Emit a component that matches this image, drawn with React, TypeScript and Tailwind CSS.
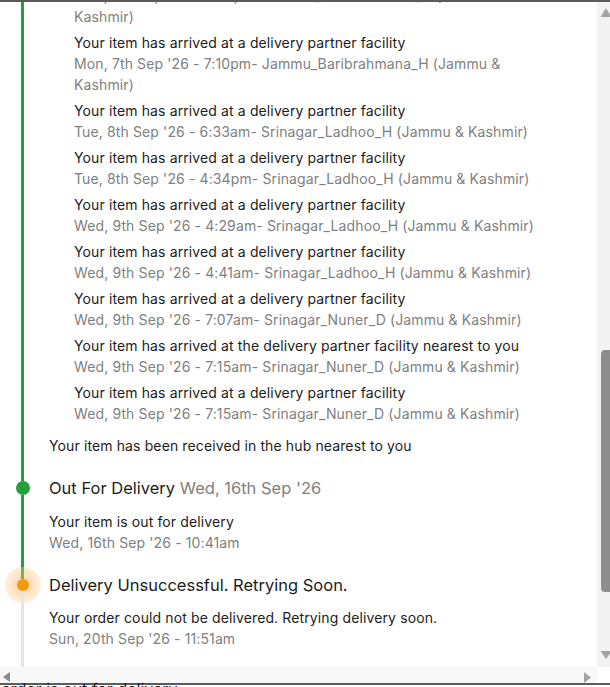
import React, { useLayoutEffect, useRef } from 'react'

type Scan = { title: string; date: string }

const ARRIVED = 'Your item has arrived at a delivery partner facility'

const scans: Scan[] = [
  { title: 'Your item has been picked up by delivery partner', date: "Thu, 3rd Sep '26 - 6:12pm- Bhiwandi_Mankoli_HB (Maharashtra)" },
  { title: 'Your item has been dispatched from a delivery partner facility', date: "Thu, 3rd Sep '26 - 9:48pm- Bhiwandi_Mankoli_HB (Maharashtra)" },
  { title: ARRIVED, date: "Fri, 4th Sep '26 - 2:21am- Bhiwandi_Mankoli_HB (Maharashtra)" },
  { title: ARRIVED, date: "Fri, 4th Sep '26 - 8:05am- Surat_Kadodara_H (Gujarat)" },
  { title: ARRIVED, date: "Fri, 4th Sep '26 - 11:40pm- Ahmedabad_Changodar_H (Gujarat)" },
  { title: ARRIVED, date: "Sat, 5th Sep '26 - 7:16am- Jaipur_Hub (Rajasthan)" },
  { title: ARRIVED, date: "Sat, 5th Sep '26 - 6:52pm- Gurgaon_Tauru_GW (Haryana)" },
  { title: ARRIVED, date: "Sun, 6th Sep '26 - 3:30am- Gurgaon_Tauru_GW (Haryana)" },
  { title: ARRIVED, date: "Sun, 6th Sep '26 - 1:14pm- Ambala_Bhagwanpur_H (Haryana)" },
  { title: ARRIVED, date: "Sun, 6th Sep '26 - 9:02pm- Jalandhar_Kartarpur_H (Punjab)" },
  { title: ARRIVED, date: "Mon, 7th Sep '26 - 5:44am- Pathankot_Hub (Punjab)" },
  { title: ARRIVED, date: "Mon, 7th Sep '26 - 2:55pm- Jammu_Baribrahmana_H (Jammu & Kashmir)" },
  { title: ARRIVED, date: "Mon, 7th Sep '26 - 7:10pm- Jammu_Baribrahmana_H (Jammu & Kashmir)" },
  { title: ARRIVED, date: "Tue, 8th Sep '26 - 6:33am- Srinagar_Ladhoo_H (Jammu & Kashmir)" },
  { title: ARRIVED, date: "Tue, 8th Sep '26 - 4:34pm- Srinagar_Ladhoo_H (Jammu & Kashmir)" },
  { title: ARRIVED, date: "Wed, 9th Sep '26 - 4:29am- Srinagar_Ladhoo_H (Jammu & Kashmir)" },
  { title: ARRIVED, date: "Wed, 9th Sep '26 - 4:41am- Srinagar_Ladhoo_H (Jammu & Kashmir)" },
  { title: ARRIVED, date: "Wed, 9th Sep '26 - 7:07am- Srinagar_Nuner_D (Jammu & Kashmir)" },
  { title: 'Your item has arrived at the delivery partner facility nearest to you', date: "Wed, 9th Sep '26 - 7:15am- Srinagar_Nuner_D (Jammu & Kashmir)" },
  { title: ARRIVED, date: "Wed, 9th Sep '26 - 7:15am- Srinagar_Nuner_D (Jammu & Kashmir)" },
]

function GreenDot() {
  return (
    <div className="flex flex-col items-center w-[45px] shrink-0">
      <div className="w-[3px] h-[5px] bg-[#23a03b]" />
      <div className="w-[14px] h-[14px] rounded-full bg-[#23a03b]" />
      <div className="w-[3px] flex-1 bg-[#23a03b]" />
    </div>
  )
}

function Heading({ label, date }: { label: string; date?: string }) {
  return (
    <div className="text-[16.5px] leading-[24px] text-[#1c1c1c]">
      {label}
      {date ? <span className="text-[#808080]"> {date}</span> : null}
    </div>
  )
}

function Entry({ title, date }: Scan) {
  return (
    <div className="text-[14px] leading-[21px] tracking-[0.12px]">
      <div className="text-[#1c1c1c]">{title}</div>
      <div className="text-[#808080]">{date}</div>
    </div>
  )
}

export default function App() {
  const ref = useRef<HTMLDivElement>(null)

  useLayoutEffect(() => {
    if (ref.current) ref.current.scrollTop = ref.current.scrollHeight
  }, [])

  return (
    <div className="w-[610px] h-[687px] overflow-hidden bg-white font-['Inter',sans-serif]">
      <div className="h-[2px] bg-[#5b5b5b]" />
      <div className="flex h-[665px]">
        <div ref={ref} className="w-[597px] h-full overflow-hidden">
          <div className="pr-[42px]">
            {/* ordered */}
            <div className="flex">
              <div className="flex flex-col items-center w-[45px] shrink-0">
                <div className="h-[21px]" />
                <div className="w-[14px] h-[14px] rounded-full bg-[#23a03b]" />
                <div className="w-[3px] flex-1 bg-[#23a03b]" />
              </div>
              <div className="pl-[4px] pt-[16px] pb-[20px]">
                <Heading label="Ordered" date="Thu, 3rd Sep '26" />
                <div className="mt-[11px]">
                  <Entry title="Your order has been placed." date="Thu, 3rd Sep '26 - 11:02am" />
                </div>
              </div>
            </div>

            {/* shipped */}
            <div className="flex">
              <GreenDot />
              <div className="pl-[4px] pb-[20px]">
                <Heading label="Shipped" date="Thu, 3rd Sep '26" />
                <div className="mt-[11px] pl-[25px] flex flex-col gap-[5px]">
                  {scans.map((s, i) => (
                    <Entry key={i} title={s.title} date={s.date} />
                  ))}
                </div>
                <div className="mt-[11px] text-[14px] leading-[21px] tracking-[0.12px] text-[#1c1c1c]">
                  Your item has been received in the hub nearest to you
                </div>
              </div>
            </div>

            {/* out for delivery */}
            <div className="flex">
              <GreenDot />
              <div className="pl-[4px] pb-[20px]">
                <Heading label="Out For Delivery" date="Wed, 16th Sep '26" />
                <div className="mt-[11px]">
                  <Entry title="Your item is out for delivery" date="Wed, 16th Sep '26 - 10:41am" />
                </div>
              </div>
            </div>

            {/* unsuccessful */}
            <div className="flex">
              <div className="flex flex-col items-center w-[45px] shrink-0">
                <div className="w-[3px] h-[6px] bg-[#23a03b]" />
                <div className="w-[36px] h-[36px] -my-[12px] rounded-full flex items-center justify-center bg-[radial-gradient(circle,rgba(250,165,60,0.55)_0%,rgba(252,195,125,0.42)_45%,rgba(253,220,175,0.32)_80%,rgba(255,240,220,0)_100%)]">
                  <div className="w-[12px] h-[12px] rounded-full bg-[#f59a0e]" />
                </div>
                <div className="w-[3px] flex-1 bg-[#e6e6e6]" />
              </div>
              <div className="pl-[4px] pb-[18px]">
                <Heading label="Delivery Unsuccessful. Retrying Soon." />
                <div className="mt-[10px]">
                  <Entry
                    title="Your order could not be delivered. Retrying delivery soon."
                    date="Sun, 20th Sep '26 - 11:51am"
                  />
                </div>
              </div>
            </div>
          </div>
        </div>

        {/* vertical scrollbar */}
        <div className="w-[13px] shrink-0 flex flex-col bg-[#f3f3f3]">
          <svg width="13" height="15" viewBox="0 0 13 15" className="shrink-0">
            <polygon points="9,6 3.5,15 14.5,15" fill="#a3a3a3" />
          </svg>
          <div className="flex-1 flex flex-col">
            <div className="h-[333px]" />
            <div className="ml-[4px] h-[242px] bg-[#8e8e8e] rounded-tl-[4px] rounded-bl-[4px]" />
          </div>
          <svg width="13" height="17" viewBox="0 0 13 17" className="shrink-0">
            <polygon points="3.5,1 14.5,1 9,9" fill="#a3a3a3" />
          </svg>
        </div>
      </div>

      {/* horizontal scrollbar */}
      <div className="flex h-[16px]">
        <div className="flex-1 flex items-center justify-between bg-[#f8f8f8]">
          <svg width="16" height="16" viewBox="0 0 16 16">
            <polygon points="3,10 10,5 10,15" fill="#8a8a8a" />
          </svg>
          <svg width="16" height="16" viewBox="0 0 16 16">
            <polygon points="3,5 10,10.5 3,16" fill="#a3a3a3" />
          </svg>
        </div>
        <div className="w-[13px] bg-white" />
      </div>
      <div className="h-[2px] bg-[#5b5b5b]" />
      <div className="-ml-[38px] -mt-[6px] whitespace-nowrap text-[16px] leading-[20px] text-[#1c1c1c]">
        Your order is out for delivery
      </div>
    </div>
  )
}
